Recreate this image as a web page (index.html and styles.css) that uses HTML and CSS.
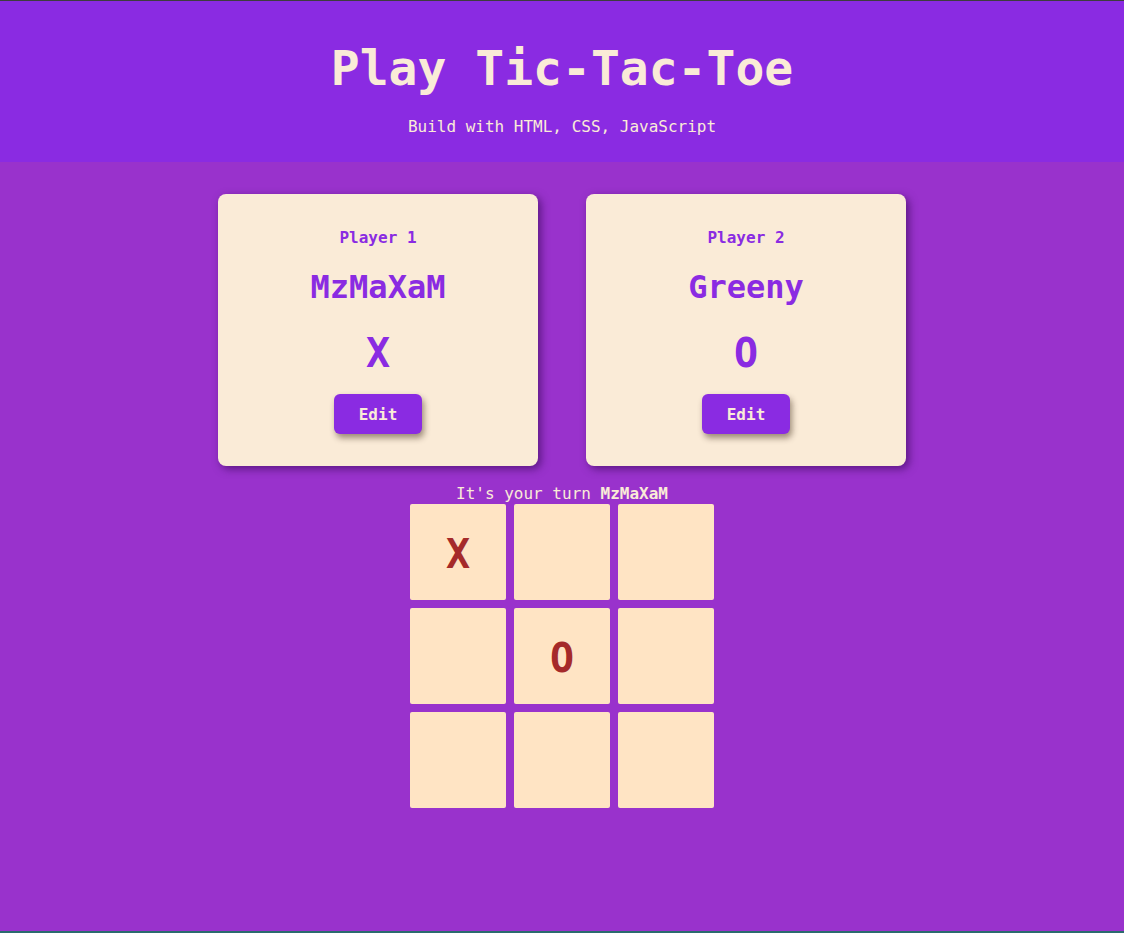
FILE: index.html
```html
<!DOCTYPE html>
<html lang="en">
<head>
<meta charset="utf-8">
<title>Tic-Tac-Toe</title>
<link rel="stylesheet" href="styles.css">
</head>
<body>
<div class="page">
  <header class="site-header">
    <h1 class="title">Play Tic-Tac-Toe</h1>
    <p class="subtitle">Build with HTML, CSS, JavaScript</p>
  </header>
  <main class="main">
    <section class="players">
      <article class="player-card">
        <h2 class="player-label">Player 1</h2>
        <h3 class="player-name">MzMaXaM</h3>
        <p class="player-symbol">X</p>
        <button class="edit-btn">Edit</button>
      </article>
      <article class="player-card">
        <h2 class="player-label">Player 2</h2>
        <h3 class="player-name">Greeny</h3>
        <p class="player-symbol">O</p>
        <button class="edit-btn">Edit</button>
      </article>
    </section>
    <section class="game">
      <p class="turn">It's your turn <strong>MzMaXaM</strong></p>
      <ol class="board">
        <li class="cell">X</li>
        <li class="cell"></li>
        <li class="cell"></li>
        <li class="cell"></li>
        <li class="cell">O</li>
        <li class="cell"></li>
        <li class="cell"></li>
        <li class="cell"></li>
        <li class="cell"></li>
      </ol>
    </section>
  </main>
</div>
</body>
</html>
```

FILE: styles.css
```css
* {
  box-sizing: border-box;
}

html, body {
  margin: 0;
  padding: 0;
}

body {
  font-family: "DejaVu Sans Mono", monospace;
  background: #9932cc;
  color: #faebd7;
}

.page {
  min-height: 933px;
  display: flex;
  flex-direction: column;
  border-top: 1px solid #3d3d3d;
  border-bottom: 2px solid #2b6a6e;
  background: #9932cc;
}

.site-header {
  background: #8a2be2;
  text-align: center;
  padding: 39px 0 26px;
}

.title {
  margin: 0 0 21px;
  font-size: 48px;
  font-weight: bold;
  line-height: 56px;
  color: #faebd7;
}

.subtitle {
  margin: 0;
  font-size: 16px;
  line-height: 19px;
  color: #faebd7;
}

.main {
  flex: 1;
  display: flex;
  flex-direction: column;
  align-items: center;
  padding-top: 32px;
}

.players {
  display: flex;
  gap: 48px;
}

.player-card {
  width: 320px;
  height: 272px;
  background: #faebd7;
  border-radius: 8px;
  box-shadow: 3px 3px 8px rgba(40, 0, 70, 0.55);
  display: flex;
  flex-direction: column;
  align-items: center;
  padding-top: 34px;
  color: #8a2be2;
}

.player-label {
  margin: 0;
  font-size: 16px;
  line-height: 19px;
  font-weight: bold;
}

.player-name {
  margin: 22px 0 0;
  font-size: 32px;
  line-height: 37px;
  font-weight: bold;
}

.player-symbol {
  margin: 24px 0 0;
  font-size: 40px;
  line-height: 47px;
  font-weight: bold;
}

.edit-btn {
  margin-top: 17px;
  width: 88px;
  height: 40px;
  border: none;
  border-radius: 6px;
  background: #8a2be2;
  color: #faebd7;
  font-family: "DejaVu Sans Mono", monospace;
  font-weight: bold;
  font-size: 16px;
  box-shadow: 2px 4px 6px rgba(40, 20, 0, 0.45);
  cursor: pointer;
}

.game {
  display: flex;
  flex-direction: column;
  align-items: center;
  margin-top: 18px;
}

.turn {
  margin: 0 0 1px;
  font-size: 16px;
  line-height: 19px;
  color: #faebd7;
}

.board {
  list-style: none;
  margin: 0;
  padding: 0;
  display: grid;
  grid-template-columns: repeat(3, 96px);
  grid-auto-rows: 96px;
  gap: 8px;
}

.cell {
  background: #ffe4c4;
  border-radius: 2px;
  display: flex;
  align-items: center;
  justify-content: center;
  padding-top: 4px;
  font-size: 40px;
  font-weight: bold;
  color: #a52a2a;
}
```
